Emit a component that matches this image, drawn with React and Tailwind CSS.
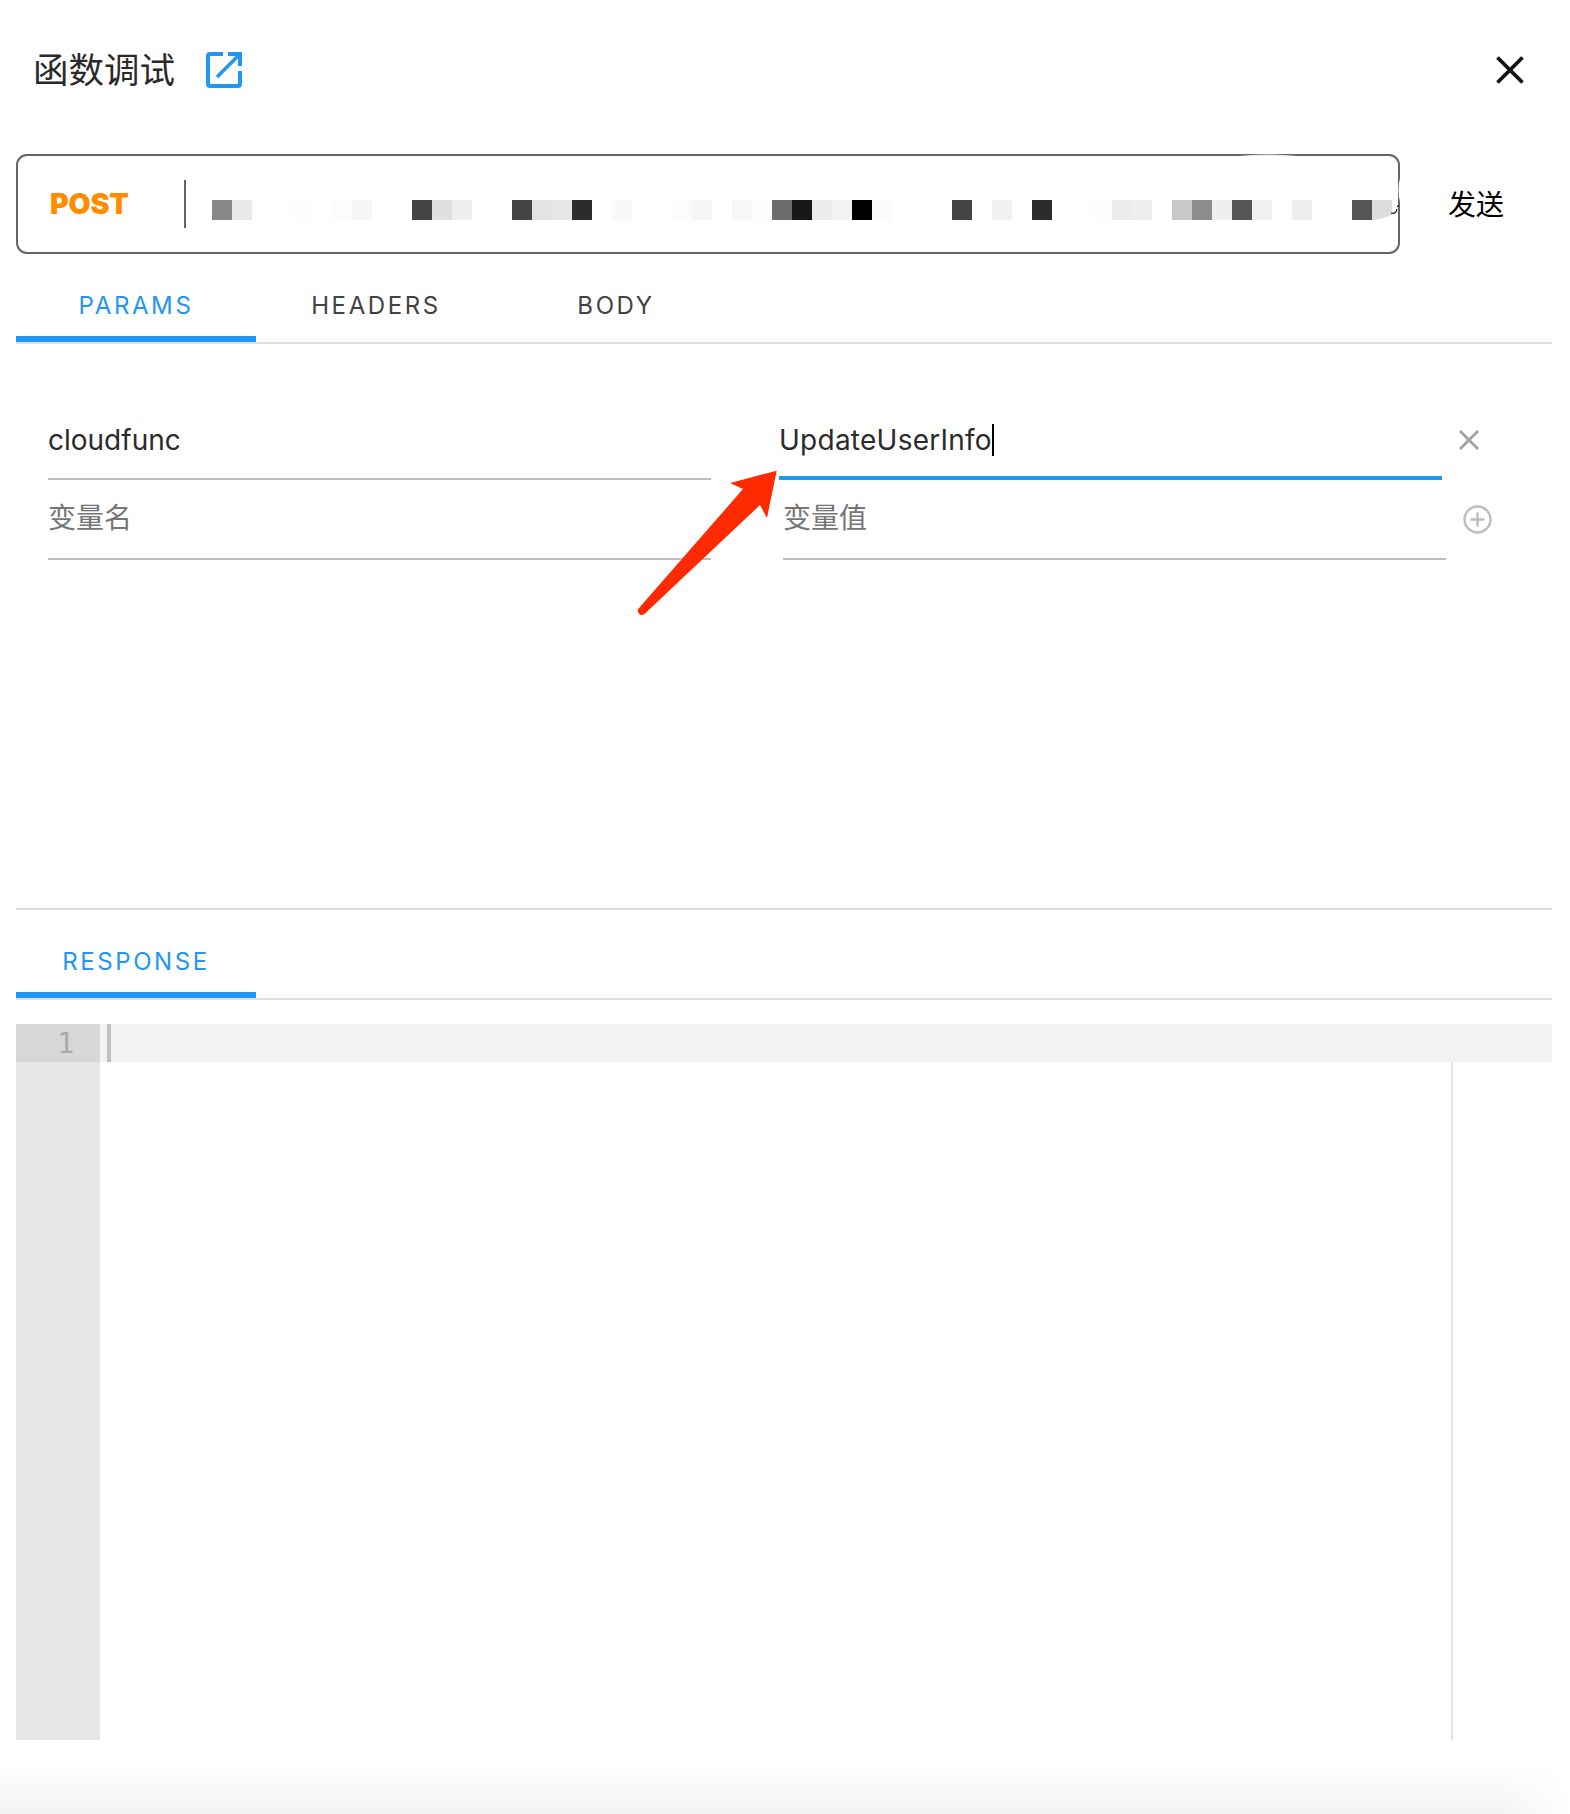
const FONT = "font-['Inter','Noto_Sans_CJK_SC',sans-serif]";

const cells = [
  "bg-[#888888]", "bg-[#e9e9e9]", "", "", "bg-[#fdfdfd]", "", "bg-[#fcfcfc]", "bg-[#f6f6f6]", "", "",
  "bg-[#444444]", "bg-[#e0e0e0]", "bg-[#efefef]", "", "", "bg-[#444444]", "bg-[#e3e3e3]", "bg-[#e6e6e6]", "bg-[#2c2c2c]", "",
  "bg-[#f9f9f9]", "", "", "bg-[#fcfcfc]", "bg-[#f6f6f6]", "", "bg-[#f8f8f8]", "bg-[#fdfdfd]", "bg-[#6d6d6d]", "bg-[#181818]",
  "bg-[#ececec]", "bg-[#f3f3f3]", "bg-[#000000]", "bg-[#fbfbfb]", "", "", "", "bg-[#444444]", "", "bg-[#f1f1f1]",
  "", "bg-[#2c2c2c]", "", "", "bg-[#fdfdfd]", "bg-[#ebebeb]", "bg-[#eeeeee]", "", "bg-[#c8c8c8]", "bg-[#8c8c8c]",
  "bg-[#efefef]", "bg-[#555555]", "bg-[#f0f0f0]", "", "bg-[#eeeeee]", "", "", "bg-[#555555]", "bg-[#dddddd]",
];

function Tab({ label, active }) {
  return (
    <div className={`w-[240px] h-[88px] flex items-center justify-center pt-[22px] text-[24px] leading-none tracking-[2.6px] border-b-[6px] ${active ? "text-[#2196f3] border-[#2196f3]" : "text-[#424242] border-transparent"}`}>
      {label}
    </div>
  );
}

function Field({ value, placeholder, className, caret }) {
  return (
    <div className={`flex items-center text-[28px] leading-none ${value ? "text-[#2b2b2b]" : "text-[#757575]"} ${className}`}>
      <span>{value || placeholder}</span>
      {caret && <span className="w-[2px] h-[32px] bg-black"></span>}
    </div>
  );
}

export default function App() {
  return (
    <div className={`relative w-[1570px] h-[1814px] bg-white overflow-hidden flex flex-col ${FONT}`}>
      <header className="h-[140px] pl-[33px] pr-[46px] flex items-center justify-between">
        <div className="flex items-center gap-[31px]">
          <h1 className="text-[35.5px] leading-none font-normal text-[#2a2a2a] mt-[2px]">函数调试</h1>
          <svg width="36" height="36" viewBox="0 0 36 36" fill="none" stroke="#2196f3" strokeWidth="4">
            <path d="M17 2H4a2 2 0 0 0-2 2v28a2 2 0 0 0 2 2h28a2 2 0 0 0 2-2V19" />
            <path d="M22 2h12v12" />
            <path d="M33 3 11 25" strokeWidth="3.6" />
          </svg>
        </div>
        <svg width="28" height="28" viewBox="0 0 28 28" fill="none" stroke="#111111" strokeWidth="3.8">
          <path d="M1.5 1.5l25 25M26.5 1.5l-25 25" />
        </svg>
      </header>

      <div className="flex items-center ml-[16px] mt-[14px]">
        <div className="w-[1384px] h-[100px] border-2 border-[#666666] rounded-[11px] flex items-center overflow-hidden">
          <div className="w-[168px] h-[48px] flex-none flex items-center pl-[32px] border-r-2 border-[#666666]">
            <span className="text-[28.5px] leading-none font-black text-[#ff8c00] tracking-[-0.2px]">POST</span>
          </div>
          <div className="ml-[26px] flex mt-[12px]">
            {cells.map((c, i) => (
              <div key={i} className={`w-[20px] h-[20px] flex-none ${c}`}></div>
            ))}
          </div>
        </div>
        <div className="ml-[48px] mt-[2px] text-[28px] leading-none text-black">发送</div>
      </div>

      <nav className="flex ml-[16px] mr-[18px] border-b-2 border-[#e0e0e0]">
        <Tab label="PARAMS" active />
        <Tab label="HEADERS" />
        <Tab label="BODY" />
      </nav>

      <section className="h-[564px] ml-[48px] flex flex-col pt-[68px]">
        <div className="flex items-center">
          <Field value="cloudfunc" className="w-[663px] h-[68px] pb-[11px] border-b-2 border-[#bdbdbd]" />
          <Field value="UpdateUserInfo" caret className="w-[663px] h-[68px] ml-[68px] pb-[8px] border-b-4 border-[#2196f3] tracking-[0.25px]" />
          <svg className="ml-[17px] -mt-[12px]" width="20" height="20" viewBox="0 0 20 20" fill="none" stroke="#a0a0a0" strokeWidth="2.6">
            <path d="M1 1l18 18M19 1L1 19" />
          </svg>
        </div>
        <div className="flex items-center">
          <Field placeholder="变量名" className="w-[663px] h-[80px] pb-[3px] border-b-2 border-[#bdbdbd]" />
          <Field placeholder="变量值" className="w-[663px] h-[80px] pb-[3px] ml-[72px] border-b-2 border-[#bdbdbd]" />
          <svg className="ml-[17px] -mt-[2px]" width="29" height="29" viewBox="0 0 29 29" fill="none" stroke="#bdbdbd" strokeWidth="2.4">
            <circle cx="14.5" cy="14.5" r="13" />
            <path d="M14.5 7.5v14M7.5 14.5h14" />
          </svg>
        </div>
      </section>

      <div className="ml-[16px] mr-[18px] h-[2px] bg-[#dcdcdc]"></div>

      <nav className="flex ml-[16px] mr-[18px] border-b-2 border-[#e0e0e0]">
        <Tab label="RESPONSE" active />
      </nav>

      <section className="ml-[16px] mr-[18px] mt-[24px] h-[716px] flex flex-col">
        <div className="h-[38px] flex bg-[#f3f3f3]">
          <div className="w-[84px] bg-[#d7d7d7] text-[#aaaaaa] text-[28px] leading-[38px] text-right pr-[26px] pt-[1px] font-['DejaVu_Sans_Mono',monospace]">1</div>
          <div className="ml-[7px] w-[4px] bg-[#c0c0c0]"></div>
        </div>
        <div className="flex-1 flex">
          <div className="w-[84px] bg-[#e6e6e6]"></div>
          <div className="ml-[1351px] w-[2px] bg-[#e6e6e6]"></div>
        </div>
      </section>

      <div className="flex-1 flex justify-end bg-gradient-to-b from-white from-30% to-[#f3f3f3]">
        <div className="w-[70px] bg-gradient-to-l from-white to-transparent"></div>
      </div>

      <svg className="absolute left-0 top-0" width="1570" height="640" viewBox="0 0 1570 640">
        <path d="M776.7 470.7 730 483 743 489 639.5 607.5a3.5 3.5 0 0 0 5 6.5L760 505l7 13z" fill="#ff2a00" />
        <path d="M1236 156.2Q1265 152.8 1300 156.2z" fill="#ffffff" fillOpacity="0.85" />
        <path d="M1400.5 176Q1396.5 190 1400.5 204z" fill="#ffffff" />
        <path d="M1392.5 214.5Q1385 218 1373 220.5L1392.5 221z" fill="#ffffff" />
        <path d="M1391 213Q1396 214.5 1397 209M1397.5 207l1-2" fill="none" stroke="#111111" strokeWidth="1.2" />
      </svg>
    </div>
  );
}
